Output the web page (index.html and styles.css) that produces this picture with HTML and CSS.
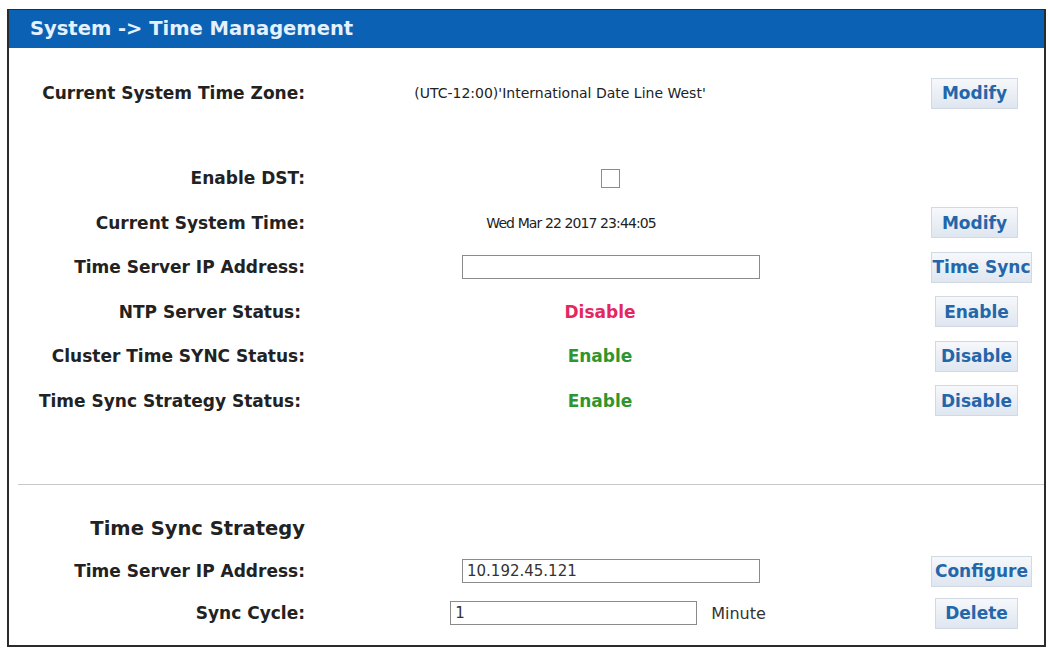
FILE: index.html
```html
<!DOCTYPE html>
<html lang="en">
<head>
    <meta charset="UTF-8">
    <title>Time Management</title>
    <link rel="stylesheet" href="styles.css">
</head>
<body>
<div class="panel">
    <h1 class="panel-title">System -&gt; Time Management</h1>

    <div class="panel-body">
        <!-- time zone -->
        <div class="row row-first">
            <span class="label">Current System Time Zone:</span>
            <span class="val val-tz">(UTC-12:00)'International Date Line West'</span>
            <button class="btn">Modify</button>
        </div>

        <div class="row">
            <span class="label">Enable DST:</span>
            <span class="val val-check"><input type="checkbox" class="check"></span>
            <span></span>
        </div>
        <div class="row">
            <span class="label">Current System Time:</span>
            <span class="val val-time">Wed Mar 22 2017 23:44:05</span>
            <button class="btn">Modify</button>
        </div>
        <div class="row">
            <span class="label">Time Server IP Address:</span>
            <span class="val val-input"><input type="text" class="textfield"></span>
            <button class="btn btn-wide">Time Sync</button>
        </div>
        <div class="row">
            <span class="label label-short">NTP Server Status:</span>
            <span class="val val-status off">Disable</span>
            <button class="btn btn-small">Enable</button>
        </div>
        <div class="row">
            <span class="label">Cluster Time SYNC Status:</span>
            <span class="val val-status on">Enable</span>
            <button class="btn btn-small">Disable</button>
        </div>
        <div class="row">
            <span class="label label-short">Time Sync Strategy Status:</span>
            <span class="val val-status on">Enable</span>
            <button class="btn btn-small">Disable</button>
        </div>

        <hr class="sep">

        <!-- sync strategy -->
        <div class="row row-head">
            <span class="label section">Time Sync Strategy</span>
        </div>
        <div class="row row-tight">
            <span class="label">Time Server IP Address:</span>
            <span class="val val-input"><input type="text" class="textfield" value="10.192.45.121"></span>
            <button class="btn btn-wide">Configure</button>
        </div>
        <div class="row row-tight">
            <span class="label">Sync Cycle:</span>
            <span class="val val-cycle"><input type="text" class="textfield short" value="1"><span class="unit">Minute</span></span>
            <button class="btn btn-small">Delete</button>
        </div>
    </div>
</div>
</body>
</html>
```

FILE: styles.css
```css
* {
    margin: 0;
    padding: 0;
    box-sizing: border-box;
}
body {
    background: #fff;
    font-family: "DejaVu Sans", Verdana, sans-serif;
    font-size: 14px;
    color: #222;
}
.panel {
    margin: 9px 2px 0 7px;
    border: 2px solid #2b2b2b;
    border-top-width: 1px;
    padding-bottom: 11px;
}
.panel-title {
    height: 38px;
    line-height: 38px;
    padding-left: 21px;
    background: #0b62b4;
    color: #e4f1ff;
    font-size: 19.5px;
    font-weight: bold;
}
.panel-body {
    padding-top: 23px;
}
.row {
    display: grid;
    grid-template-columns: 296px 626px 87px;
    padding-right: 26px;
    height: 44.5px;
    align-items: center;
}
.row-first {
    height: 44px;
    margin-bottom: 41px;
}
.row-head {
    height: 44px;
}
.row-tight {
    height: 42px;
}
.label {
    text-align: right;
    font-weight: bold;
    font-size: 17px;
    white-space: nowrap;
}
.label-short {
    padding-right: 4px;
}
.label.section {
    font-size: 19.5px;
}
.val {
    text-align: center;
    padding-right: 20px;
    white-space: nowrap;
}
.val-tz {
    padding-right: 116px;
}
.val-time {
    padding-right: 94px;
    letter-spacing: -0.9px;
}
.val-status {
    padding-right: 36px;
    font-weight: bold;
    font-size: 17px;
}
.val-check {
    padding-right: 16px;
    display: flex;
    justify-content: center;
}
.val-input {
    padding-right: 14px;
    display: flex;
    justify-content: center;
}
.val-cycle {
    display: flex;
    justify-content: center;
    align-items: center;
    padding-right: 20px;
}
.off {
    color: #e4275f;
}
.on {
    color: #2f962f;
}
.check {
    appearance: none;
    width: 19px;
    height: 19px;
    border: 1px solid #8c8c8c;
    background: #fff;
}
.textfield {
    width: 298px;
    height: 24px;
    border: 1px solid #8a8a8a;
    padding: 0 4px;
    font-family: "DejaVu Sans", Verdana, sans-serif;
    font-size: 15px;
    color: #333;
}
.textfield.short {
    width: 247px;
}
.unit {
    margin-left: 14px;
    font-size: 16px;
    color: #333;
}
.btn {
    justify-self: end;
    width: 87px;
    height: 31px;
    border: 1px solid #d3d9e3;
    background: linear-gradient(#f6f8fb, #dfe6f0);
    color: #2466aa;
    font-family: "DejaVu Sans", Verdana, sans-serif;
    font-size: 17px;
    font-weight: bold;
    white-space: nowrap;
}
.btn-small {
    width: 83px;
    padding: 0;
}
.btn-wide {
    justify-self: start;
    width: 101px;
    padding: 0;
    overflow: hidden;
}
.sep {
    border: 0;
    border-top: 1px solid #c9c9c9;
    margin: 61px 0 21px 9px;
}
```
